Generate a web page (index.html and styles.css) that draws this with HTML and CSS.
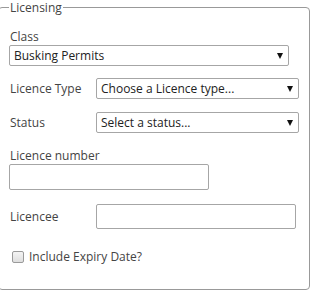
FILE: index.html
```html
<!DOCTYPE html>
<html>
<head>
    <title>Licensing</title>
    <link rel="stylesheet" href="styles.css">
</head>
<body>
<form id="licensingForm">
    <fieldset class="licensing">
        <legend>Licensing</legend>

        <div class="field stacked class-field">
            <label for="licenceClass">Class</label>
            <div class="select-wrap wide">
                <select id="licenceClass">
                    <option>Busking Permits</option>
                </select>
            </div>
        </div>

        <div class="field inline type-field">
            <label for="licenceType">Licence Type</label>
            <div class="select-wrap">
                <select id="licenceType">
                    <option>Choose a Licence type...</option>
                </select>
            </div>
        </div>

        <div class="field inline status-field">
            <label for="status">Status</label>
            <div class="select-wrap">
                <select id="status">
                    <option>Select a status...</option>
                </select>
            </div>
        </div>

        <div class="field stacked number-field">
            <label for="licenceNumber">Licence number</label>
            <input type="text" id="licenceNumber">
        </div>

        <div class="field inline licencee-field">
            <label for="licencee">Licencee</label>
            <input type="text" id="licencee">
        </div>

        <div class="check-field">
            <input type="checkbox" id="expiry">
            <label for="expiry">Include Expiry Date?</label>
        </div>
    </fieldset>
</form>
</body>
</html>
```

FILE: styles.css
```css
body {
    margin: 0;
    background-color: #ffffff;
    font-family: 'Open Sans', sans-serif;
    font-size: 12px;
    color: #444444;
}
.licensing {
    margin: 0 0 0 -2px;
    width: 311px;
    height: 290px;
    box-sizing: border-box;
    padding: 0 10px;
    border: 1px solid #999999;
    border-radius: 4px;
}
.licensing legend {
    padding: 0 1px;
    line-height: 15px;
    font-size: 12px;
}
.field {
    display: flex;
}
.field.stacked {
    flex-direction: column;
}
.field.inline {
    align-items: center;
}
.field.inline label {
    width: 87px;
    flex: none;
    padding-left: 1px;
    box-sizing: border-box;
}
.field.stacked label {
    padding-left: 1px;
    line-height: 17px;
}
.class-field {
    margin-top: 13px;
}
.type-field {
    margin-top: 12px;
}
.status-field {
    margin-top: 13px;
}
.number-field {
    margin-top: 14px;
}
.licencee-field {
    margin-top: 14px;
}
.select-wrap {
    position: relative;
    width: 203px;
}
.select-wrap.wide {
    width: 280px;
}
.select-wrap::after {
    content: "";
    position: absolute;
    right: 6px;
    top: 8px;
    border-left: 3px solid transparent;
    border-right: 3px solid transparent;
    border-top: 6px solid #111111;
}
select {
    appearance: none;
    -webkit-appearance: none;
    width: 100%;
    height: 21px;
    margin: 0;
    padding: 0 4px;
    border: 1px solid #a6a6a6;
    border-radius: 2px;
    background-color: #ffffff;
    font-family: 'Open Sans', sans-serif;
    font-size: 12px;
    color: #222222;
}
input[type="text"] {
    width: 200px;
    height: 26px;
    box-sizing: border-box;
    margin: 0;
    border: 1px solid #a6a6a6;
    border-radius: 2px;
}
.licencee-field input[type="text"] {
    height: 25px;
}
.check-field {
    display: flex;
    align-items: center;
    margin-top: 19px;
    padding-left: 3px;
}
.check-field input {
    appearance: none;
    -webkit-appearance: none;
    width: 12px;
    height: 12px;
    margin: 0 5px 0 0;
    border: 1px solid #9a9a9a;
    border-radius: 2px;
    background: linear-gradient(#f4f4f4, #dedede);
}
```
